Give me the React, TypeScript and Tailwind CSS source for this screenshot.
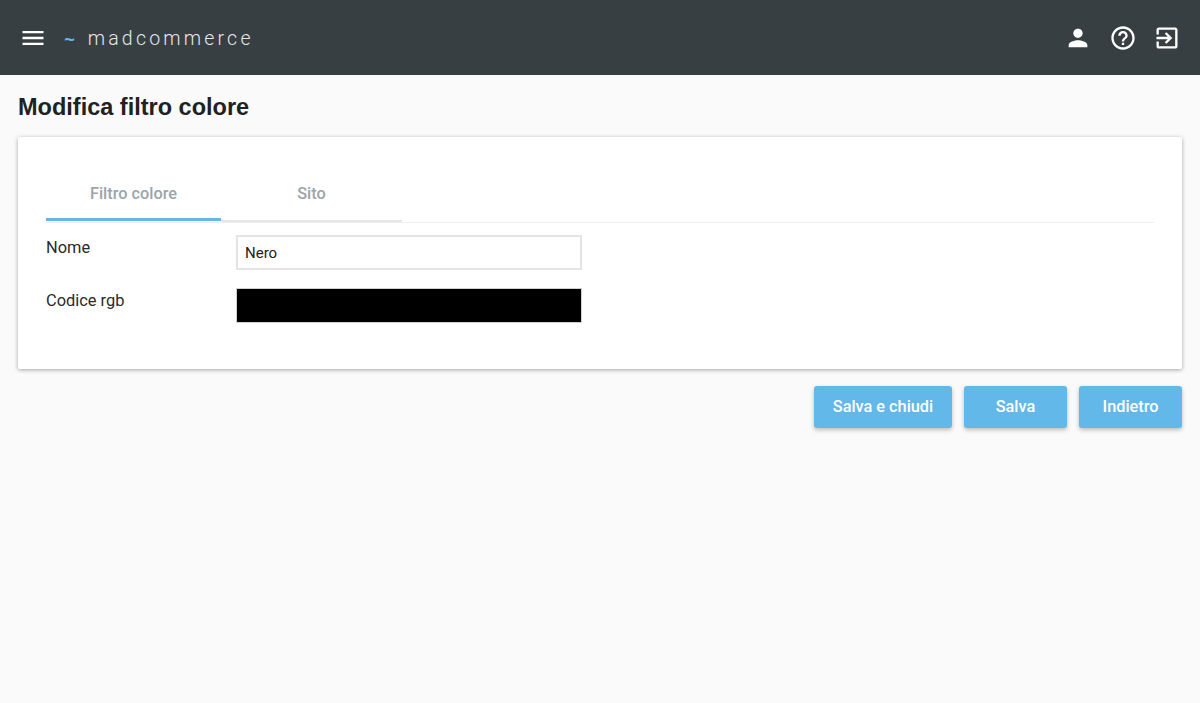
import React from "react";

const roboto = "font-['Roboto',sans-serif]";

const Icon: React.FC<{ d: string; className?: string }> = ({ d, className }) => (
  <svg viewBox="0 0 24 24" fill="currentColor" className={className}>
    <path d={d} />
  </svg>
);

const ActionButton: React.FC<{ label: string; width: string }> = ({ label, width }) => (
  <button
    className={`${width} h-[42px] rounded-[3px] bg-[#62b8e9] text-white text-[16.3px] font-medium ${roboto} shadow-[0_2px_4px_rgba(0,0,0,0.25)]`}
  >
    {label}
  </button>
);

const App: React.FC = () => {
  return (
    <div className={`min-h-[703px] bg-[#fafafa] ${roboto}`}>
      {/* top bar */}
      <header className="h-[75px] bg-[#383f43] flex items-center justify-between px-[18.7px] text-white">
        <div className="flex items-center">
          <Icon
            d="M3 18h18v-2H3v2zm0-5h18v-2H3v2zm0-7v2h18V6H3z"
            className="w-[28px] h-[28px]"
          />
          <span className="ml-[17.5px] mt-[5px] text-[#62b8e9] text-[18px] font-bold font-['Liberation_Sans',sans-serif]">~</span>
          <span className="ml-[13px] mt-[3px] text-[19.5px] font-light tracking-[3.2px] text-[#e4e6e7]">
            madcommerce
          </span>
        </div>
        <div className="flex items-center gap-[16.6px]">
          <Icon
            d="M12 12c2.21 0 4-1.79 4-4s-1.79-4-4-4-4 1.79-4 4 1.79 4 4 4zm0 2c-2.67 0-8 1.34-8 4v2h16v-2c0-2.66-5.33-4-8-4z"
            className="w-[28px] h-[28px]"
          />
          <Icon
            d="M11 18h2v-2h-2v2zm1-16C6.48 2 2 6.48 2 12s4.48 10 10 10 10-4.48 10-10S17.52 2 12 2zm0 18c-4.41 0-8-3.59-8-8s3.59-8 8-8 8 3.59 8 8-3.59 8-8 8zm0-14c-2.21 0-4 1.79-4 4h2c0-1.1.9-2 2-2s2 .9 2 2c0 2-3 1.75-3 5h2c0-2.25 3-2.5 3-5 0-2.21-1.79-4-4-4z"
            className="w-[28px] h-[28px]"
          />
          <Icon
            d="M10.09 15.59L11.5 17l5-5-5-5-1.41 1.41L12.67 11H3v2h9.67l-2.58 2.59zM19 3H5c-1.11 0-2 .9-2 2v4h2V5h14v14H5v-4H3v4c0 1.1.89 2 2 2h14c1.1 0 2-.9 2-2V5c0-1.1-.9-2-2-2z"
            className="w-[28px] h-[28px]"
          />
        </div>
      </header>

      <main className="px-[18px]">
        <h1 className="pt-[17px] h-[62px] text-[23.5px] leading-[30px] font-bold text-[#212121] font-['Liberation_Sans',sans-serif]">
          Modifica filtro colore
        </h1>

        {/* form card */}
        <section className="h-[232px] bg-white rounded-[2px] px-[28px] pt-[37px] shadow-[0_1px_4px_rgba(0,0,0,0.35)]">
          <div className="flex h-[49px] border-b border-[#eeeeee]">
            <div className="w-[175px] h-[47px] border-b-[3px] border-[#62b8e9] pt-[6px] text-center text-[16.3px] leading-[28px] font-medium text-[#9aa5ab]">
              Filtro colore
            </div>
            <div className="w-[181px] h-[48px] border-b-[2px] border-[#e6e6e6] pt-[6px] text-center text-[16.3px] leading-[28px] font-medium text-[#9aa5ab]">
              Sito
            </div>
          </div>

          <div className="mt-[12px] flex h-[35px]">
            <label className="w-[190px] pt-[1px] text-[16.4px] leading-[24px] text-[#2a2a2a]">Nome</label>
            <input
              readOnly
              value="Nero"
              className="w-[346px] h-[35px] border-2 border-[#e4e4e4] bg-white px-[7px] text-[15px] text-[#212121] outline-none"
            />
          </div>

          <div className="mt-[18px] flex h-[35px]">
            <label className="w-[190px] pt-[1px] text-[16.4px] leading-[24px] text-[#2a2a2a]">Codice rgb</label>
            <div className="w-[346px] h-[35px] border border-[#cfcfcf] bg-black" />
          </div>
        </section>

        {/* actions */}
        <div className="mt-[17px] flex justify-end gap-[12px]">
          <ActionButton label="Salva e chiudi" width="w-[138px]" />
          <ActionButton label="Salva" width="w-[103px]" />
          <ActionButton label="Indietro" width="w-[103px]" />
        </div>
      </main>
    </div>
  );
};

export default App;
